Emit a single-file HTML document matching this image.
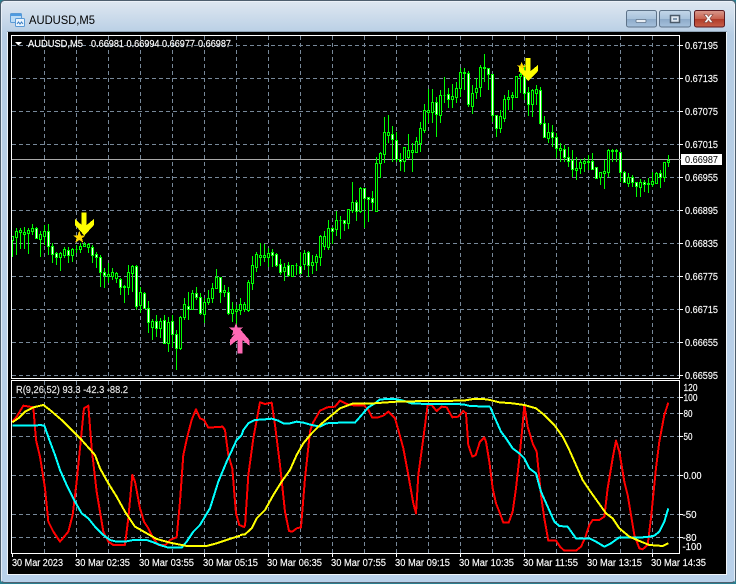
<!DOCTYPE html>
<html><head><meta charset="utf-8"><title>AUDUSD,M5</title>
<style>
html,body{margin:0;padding:0;background:#000;width:736px;height:584px;overflow:hidden}
svg{display:block}
text{font-family:"Liberation Sans",sans-serif;font-size:10px;fill:#fff;stroke:#fff;stroke-width:.15}
</style></head><body>
<svg width="736" height="584" viewBox="0 0 736 584" xmlns="http://www.w3.org/2000/svg">
<defs>
<linearGradient id="f" x1="0" y1="0" x2="0" y2="1"><stop offset="0" stop-color="#dfe8f1"/><stop offset=".06" stop-color="#b6cde4"/><stop offset="1" stop-color="#b9d1ea"/></linearGradient>
<linearGradient id="b" x1="0" y1="0" x2="0" y2="1"><stop offset="0" stop-color="#c3d6e8"/><stop offset=".5" stop-color="#a9c3dc"/><stop offset=".52" stop-color="#8daac8"/><stop offset="1" stop-color="#a6c2dd"/></linearGradient>
<linearGradient id="r" x1="0" y1="0" x2="0" y2="1"><stop offset="0" stop-color="#d99a8e"/><stop offset=".5" stop-color="#c8624f"/><stop offset=".52" stop-color="#b03a28"/><stop offset="1" stop-color="#c8604a"/></linearGradient>
</defs>
<!-- window frame -->
<rect width="736" height="584" fill="#2a7f90"/>
<rect x=".5" y=".5" width="735" height="582" rx="4" fill="url(#f)" stroke="#4e5f6e"/>
<path d="M1.5 4V581.5M734.5 4V581.5M4 1.5H732" stroke="#eef4fa" fill="none" opacity=".8"/>
<rect x="7.5" y="31.5" width="719" height="543" fill="#000" stroke="#f0f5fa" stroke-width="1" shape-rendering="crispEdges"/>
<rect x="7" y="31" width="720" height="1" fill="#8fa3b5"/>
<!-- title icon -->
<rect x="10.5" y="13.5" width="11" height="9" rx="1" fill="#bcdcf6" stroke="#5a9ad6"/>
<rect x="11" y="14" width="10" height="2" fill="#4f9be0"/>
<rect x="15.5" y="18.5" width="9" height="8" rx="1" fill="#eaf4fd" stroke="#5a9ad6"/>
<path d="M17 24l1.500-2 1.500 2 1.500-2 1.500 2" stroke="#3b7fc4" fill="none"/>
<text x="29" y="24" textLength="66" lengthAdjust="spacingAndGlyphs" style="font-size:12px;fill:#000;stroke:none">AUDUSD,M5</text>
<!-- buttons -->
<rect x="626.5" y="10.500" width="30" height="16.500" rx="2" fill="url(#b)" stroke="#5d7288"/>
<rect x="636" y="19.500" width="10" height="3" rx="1" fill="#e8eef4" stroke="#5d7288" stroke-width=".8"/>
<rect x="659.5" y="10.500" width="31" height="16.500" rx="2" fill="url(#b)" stroke="#5d7288"/>
<rect x="670.500" y="15.500" width="9" height="7" fill="#dfe8f1" stroke="#4a5a6a" stroke-width="1.500"/>
<rect x="673" y="18" width="4" height="2" fill="#7f97ae"/>
<rect x="694.5" y="10.500" width="30" height="16.500" rx="2" fill="url(#r)" stroke="#5c1a20"/>
<path d="M704 14.500h3l1.500 2 1.500-2h3l-3 4 3 4h-3l-1.500-2-1.500 2h-3l3-4z" fill="#f4f4f4" stroke="#7a3a34" stroke-width=".6"/>

<!-- chart grid -->
<g fill="none" stroke="#778899" stroke-width="1" stroke-dasharray="4 3" shape-rendering="crispEdges">
<path d="M44.5 36V378M76.5 36V378M108.5 36V378M140.5 36V378M172.5 36V378M204.5 36V378M236.5 36V378M268.5 36V378M300.5 36V378M332.5 36V378M364.5 36V378M396.5 36V378M428.5 36V378M460.5 36V378M492.5 36V378M524.5 36V378M556.5 36V378M588.5 36V378M620.5 36V378M652.5 36V378"/>
<path d="M12 45.500H679M12 78.500H679M12 111.500H679M12 144.500H679M12 177.500H679M12 210.500H679M12 243.500H679M12 276.500H679M12 309.500H679M12 342.500H679M12 375.500H679"/>
<path d="M44.500 381V553M76.500 381V553M108.500 381V553M140.500 381V553M172.500 381V553M204.500 381V553M236.500 381V553M268.500 381V553M300.500 381V553M332.500 381V553M364.500 381V553M396.500 381V553M428.500 381V553M460.500 381V553M492.500 381V553M524.500 381V553M556.500 381V553M588.500 381V553M620.500 381V553M652.500 381V553"/>
<path d="M12 397.500H679M12 413.500H679M12 436.500H679M12 475.500H679M12 514.500H679M12 537.500H679"/>
</g>
<path d="M12 159.500H679" stroke="#a9a9a9" shape-rendering="crispEdges"/>

<!-- candles -->
<g shape-rendering="crispEdges" stroke="#00ff00" stroke-width="1">
<path fill="none" d="M12.5 237V257M16.5 228V255M20.5 228V249M24.500 227V249M28.500 228V254M32.500 224V235M36.500 227V239M40.500 231V257M44.500 225V245M48.500 224V255M52.500 243V263M56.500 252V265M60.500 252V271M64.500 247V258M68.500 247V263M72.500 248V262M76.500 245V253M80.500 243V253M84.500 242V247M88.500 243V253M92.500 245V263M96.500 252V268M100.500 255V287M104.500 268V288M108.500 263V283M112.500 268V280M116.500 272V283M120.500 278V295M124.500 285V303M128.500 265V295M132.500 265V292M136.500 265V310M140.500 287V313M144.500 292V308M148.500 301V333M152.500 319V340M156.500 315V337M160.500 318V338M164.500 315V343M168.500 317V352M172.500 315V347M176.500 330V370M180.500 316V350M184.500 298V320M188.500 292V320M192.500 290V310M196.500 287V300M200.500 293V315M204.500 298V323M208.500 290V305M212.500 283V303M216.500 269V288M220.500 277V303M224.500 285V297M228.500 287V315M232.500 302V322M236.500 305V325M240.500 298V315M244.500 302V312M248.500 280V312M252.500 256V290M256.500 252V272M260.500 243V266M264.500 244V262M268.500 248V267M272.500 249V267M276.500 253V267M280.500 259V275M284.500 263V281M288.500 262V277M292.500 265V277M296.500 263V275M300.500 252V273M304.500 250V270M308.500 251V277M312.500 255V274M316.500 254V271M320.500 235V266M324.500 231V250M328.500 220V250M332.500 227V244M336.500 211V236M340.500 216V239M344.500 220V231M348.500 209V229M352.500 182V213M356.500 200V221M360.500 187V213M364.500 188V228M368.500 197V222M372.500 191V211M376.500 157V211M380.500 152V178M384.500 117V163M388.500 115V143M392.500 126V162M396.500 132V162M400.500 153V171M404.500 147V172M408.500 134V159M412.500 143V172M416.500 137V152M420.500 122V152M424.500 104V133M428.500 89V123M432.500 89V123M436.500 97V137M440.500 90V123M444.500 77V103M448.500 88V108M452.500 84V108M456.500 82V103M460.500 68V97M464.500 68V90M468.500 71V107M472.500 85V114M476.500 78V99M480.500 65V97M484.500 54V82M488.500 68V90M492.500 74V122M496.500 115V137M500.500 110V133M504.500 95V122M508.500 90V110M512.500 92V110M516.500 76V98M520.500 67V93M524.500 65V100M528.500 87V116M532.500 89V117M536.500 85V105M540.500 87V125M544.500 116V138M548.500 123V143M552.500 125V147M556.500 133V158M560.500 143V162M564.500 145V162M568.500 147V167M572.500 150V177M576.500 157V180M580.500 159V174M584.500 158V172M588.500 155V170M592.500 153V169M596.500 167V178M600.500 172V185M604.500 160V189M608.500 149V177M612.500 149V162M616.500 149V162M620.500 152V182M624.500 171V183M628.500 173V187M632.500 175V187M636.500 182V197M640.500 179V197M644.500 180V192M648.500 178V193M652.500 172V187M656.500 172V183M660.500 170V188M664.500 162V182M668.500 155V167"/>
<path fill="#000" d="M11.500 236.500h2v4h-2zM15.500 231.500h2v6h-2zM19.500 230.500h2v2h-2zM23.500 232.500h2v2h-2zM27.500 230.500h2v3h-2zM31.500 228.500h2v3h-2zM39.500 234.500h2v5h-2zM43.500 231.500h2v5h-2zM59.500 253.500h2v4h-2zM63.500 249.500h2v6h-2zM71.500 249.500h2v6h-2zM75.500 249.500h2v0h-2zM79.500 246.500h2v3h-2zM83.500 244.500h2v2h-2zM87.500 244.500h2v3h-2zM107.500 274.500h2v2h-2zM111.500 272.500h2v4h-2zM115.500 273.500h2v5h-2zM123.500 286.500h2v1h-2zM127.500 272.500h2v15h-2zM131.500 266.500h2v7h-2zM139.500 292.500h2v13h-2zM151.500 321.500h2v6h-2zM159.500 321.500h2v7h-2zM167.500 322.500h2v21h-2zM179.500 317.500h2v31h-2zM183.500 304.500h2v13h-2zM191.500 293.500h2v16h-2zM203.500 302.500h2v12h-2zM207.500 298.500h2v4h-2zM211.500 288.500h2v10h-2zM215.500 277.500h2v11h-2zM223.500 290.500h2v2h-2zM231.500 309.500h2v4h-2zM235.500 309.500h2v2h-2zM239.500 304.500h2v6h-2zM243.500 304.500h2v5h-2zM247.500 282.500h2v28h-2zM251.500 265.500h2v18h-2zM255.500 254.500h2v13h-2zM259.500 255.500h2v2h-2zM263.500 255.500h2v2h-2zM267.500 253.500h2v4h-2zM283.500 267.500h2v4h-2zM291.500 265.500h2v11h-2zM295.500 265.500h2v0h-2zM303.500 253.500h2v11h-2zM311.500 262.500h2v3h-2zM315.500 256.500h2v6h-2zM319.500 236.500h2v21h-2zM323.500 236.500h2v10h-2zM327.500 228.500h2v19h-2zM335.500 220.500h2v9h-2zM339.500 220.500h2v0h-2zM347.500 209.500h2v14h-2zM351.500 202.500h2v8h-2zM359.500 188.500h2v23h-2zM375.500 163.500h2v48h-2zM379.500 153.500h2v10h-2zM383.500 132.500h2v22h-2zM387.500 132.500h2v3h-2zM403.500 147.500h2v14h-2zM407.500 150.500h2v7h-2zM411.500 150.500h2v2h-2zM415.500 141.500h2v11h-2zM419.500 128.500h2v15h-2zM423.500 110.500h2v20h-2zM427.500 110.500h2v2h-2zM431.500 102.500h2v10h-2zM439.500 95.500h2v20h-2zM443.500 95.500h2v0h-2zM451.500 96.500h2v3h-2zM455.500 88.500h2v9h-2zM459.500 72.500h2v16h-2zM463.500 72.500h2v1h-2zM471.500 93.500h2v13h-2zM475.500 88.500h2v4h-2zM479.500 67.500h2v20h-2zM483.500 67.500h2v1h-2zM499.500 116.500h2v12h-2zM503.500 99.500h2v19h-2zM507.500 97.500h2v2h-2zM511.500 95.500h2v2h-2zM515.500 76.500h2v21h-2zM519.500 74.500h2v2h-2zM531.500 90.500h2v14h-2zM535.500 89.500h2v4h-2zM547.500 132.500h2v6h-2zM559.500 148.500h2v2h-2zM575.500 168.500h2v2h-2zM579.500 162.500h2v6h-2zM583.500 161.500h2v2h-2zM587.500 161.500h2v1h-2zM599.500 172.500h2v5h-2zM603.500 171.500h2v2h-2zM607.500 150.500h2v22h-2zM611.500 150.500h2v1h-2zM615.500 150.500h2v1h-2zM627.500 177.500h2v6h-2zM639.500 182.500h2v5h-2zM647.500 183.500h2v1h-2zM651.500 181.500h2v3h-2zM655.500 173.500h2v10h-2zM663.500 162.500h2v15h-2zM667.500 160.500h2v2h-2z"/>
<path fill="#fff" d="M35.500 228.500h2v10h-2zM47.500 231.500h2v15h-2zM51.500 246.500h2v8h-2zM55.500 253.500h2v4h-2zM67.500 250.500h2v5h-2zM91.500 247.500h2v8h-2zM95.500 254.500h2v3h-2zM99.500 257.500h2v15h-2zM103.500 272.500h2v3h-2zM119.500 279.500h2v8h-2zM135.500 266.500h2v40h-2zM143.500 293.500h2v15h-2zM147.500 308.500h2v14h-2zM155.500 321.500h2v7h-2zM163.500 320.500h2v23h-2zM171.500 321.500h2v13h-2zM175.500 334.500h2v14h-2zM187.500 306.500h2v3h-2zM195.500 293.500h2v4h-2zM199.500 297.500h2v16h-2zM219.500 277.500h2v15h-2zM227.500 292.500h2v21h-2zM271.500 252.500h2v3h-2zM275.500 254.500h2v11h-2zM279.500 264.500h2v8h-2zM287.500 265.500h2v10h-2zM299.500 266.500h2v7h-2zM307.500 252.500h2v13h-2zM331.500 228.500h2v3h-2zM343.500 220.500h2v3h-2zM355.500 202.500h2v9h-2zM363.500 188.500h2v10h-2zM367.500 197.500h2v2h-2zM371.500 198.500h2v4h-2zM391.500 134.500h2v5h-2zM395.500 140.500h2v19h-2zM399.500 159.500h2v2h-2zM435.500 102.500h2v12h-2zM447.500 94.500h2v5h-2zM467.500 73.500h2v31h-2zM487.500 68.500h2v6h-2zM491.500 74.500h2v41h-2zM495.500 115.500h2v13h-2zM523.500 76.500h2v17h-2zM527.500 92.500h2v12h-2zM539.500 90.500h2v33h-2zM543.500 123.500h2v14h-2zM551.500 132.500h2v5h-2zM555.500 137.500h2v11h-2zM563.500 149.500h2v8h-2zM567.500 157.500h2v4h-2zM571.500 160.500h2v9h-2zM591.500 161.500h2v8h-2zM595.500 167.500h2v11h-2zM619.500 152.500h2v20h-2zM623.500 172.500h2v10h-2zM631.500 177.500h2v5h-2zM635.500 182.500h2v4h-2zM643.500 182.500h2v2h-2zM659.500 173.500h2v4h-2z"/>
</g>

<!-- arrows and stars -->
<g transform="scale(.3333) translate(0 600)" shape-rendering="crispEdges">
<polygon fill="#ffd700" points="238,92 243,106 257,106 246,115 250,128 238,120 226,128 230,115 219,106 233,106"/>
<polygon fill="#ffff00" points="245,37 260,37 260,75 282,57 282,75 253,107 225,75 225,57 245,75"/>
<polygon fill="#ff69b4" points="712,460 727,460 727,420 748,437 748,420 718,385 690,420 690,437 712,420"/>
<polygon fill="#ff69b4" points="708,368 713,383 729,383 716,393 721,408 708,399 695,408 700,393 687,383 703,383"/>
</g>
<g transform="translate(420 40) scale(.3333)" shape-rendering="crispEdges">
<polygon fill="#ffd700" points="305,65 309,76 320,76 311,83 314,94 305,88 296,94 299,83 290,76 301,76"/>
<polygon fill="#ffff00" points="317,54 332,54 332,93 354,75 354,93 325,123 297,93 297,78 317,93"/>
</g>

<!-- indicator -->
<g fill="none" stroke-width="6" stroke-linejoin="round" shape-rendering="crispEdges">
<g transform="translate(0 375) scale(.3333)">
<polyline stroke="#ff0000" points="37,140 50,125 70,92 100,97 108,195 120,245 135,340 145,440 160,470 180,500 205,470 218,420 230,320 243,190 252,100 265,92 275,220 290,350 310,470 325,500 340,510 375,510 385,430 397,300 405,320 420,400 432,440 445,460 460,490 475,510 497,510 510,495 530,487 540,380 550,240 562,185 575,135 588,103 600,130 612,135 625,158 668,155 675,165 685,240 697,280 708,415 718,450 735,457"/>
</g>
<g transform="translate(240 375) scale(.3333)">
<polyline stroke="#ff0000" points="15,455 25,300 40,190 60,82 75,87 95,83 105,150 120,270 135,410 147,468 157,470 170,460 183,457 195,310 210,170 218,145 240,107 262,97 285,95 300,77 320,87 345,92 373,92 385,105 397,128 415,127 430,122 445,110 465,130 475,165 490,220 505,300 520,385 528,415 535,300 550,190 563,90 575,90 590,108 605,95 620,97 637,127 655,125 670,108 678,115 685,210 697,245 707,240 720,200 733,187 738,200"/>
</g>
<g transform="translate(486 375) scale(.3333)">
<polyline stroke="#ff0000" points="0,200 10,260 20,340 30,385 40,410 52,443 68,443 80,410 90,340 100,250 108,170 115,90 125,155 140,205 152,230 165,360 175,430 187,497 210,497 222,515 235,527 270,527 285,515 297,490 310,450 320,435 340,435 355,425 365,340 380,250 390,197 400,230 415,320 425,360 445,480 460,520 470,523 485,510 495,430 510,280 520,200 535,120 547,83"/>
</g>
<g transform="translate(0 375) scale(.3333)">
<polyline stroke="#00ffff" points="37,152 105,152 120,150 133,152 150,200 165,240 180,285 200,330 225,380 245,415 265,430 285,455 310,480 330,495 350,500 375,500 400,495 440,495 460,502 480,510 505,518 545,518 560,500 580,470 600,450 630,400 655,320 680,260 710,195 725,180"/>
</g>
<g transform="translate(240 375) scale(.3333)">
<polyline stroke="#00ffff" points="5,180 10,165 25,145 45,135 75,133 95,131 115,137 130,145 150,145 170,140 190,143 215,150 240,155 260,145 300,143 345,143 365,120 385,97 405,85 420,73 465,72 490,77 515,85 560,87 640,87 670,88 690,93 750,95"/>
</g>
<g transform="translate(486 375) scale(.3333)">
<polyline stroke="#00ffff" points="12,95 25,125 45,170 60,190 80,220 100,235 115,250 130,280 150,295 165,350 185,395 205,440 220,453 245,455 270,490 310,490 330,500 355,515 375,505 400,487 470,487 490,485 505,482 520,470 535,440 547,400"/>
</g>
<g transform="translate(0 375) scale(.3333)">
<polyline stroke="#ffff00" points="37,142 55,130 75,110 100,97 130,90 150,105 185,135 215,165 245,195 285,240 300,280 325,325 350,365 375,410 405,455 440,475 470,492 510,503 560,513 620,513 650,505 680,495 720,482"/>
</g>
<g transform="translate(240 375) scale(.3333)">
<polyline stroke="#ffff00" points="0,480 15,478 35,460 50,430 75,405 100,360 125,320 150,285 170,240 190,205 215,175 240,150 270,125 300,100 340,85 400,85 470,80 560,78 670,77 700,72 730,72 750,75"/>
</g>
<g transform="translate(486 375) scale(.3333)">
<polyline stroke="#ffff00" points="12,75 40,82 80,85 115,90 150,100 175,120 205,150 230,185 250,225 270,270 290,315 310,345 335,380 360,415 380,430 400,460 430,485 465,500 490,510 530,513 547,505"/>
</g>
</g>

<!-- panel borders and ticks -->
<g fill="none" stroke="#fff" shape-rendering="crispEdges">
<rect x="11.500" y="35.500" width="668" height="343"/>
<rect x="11.500" y="380.500" width="668" height="173"/>
<path d="M679 45.500h4M679 78.500h4M679 111.500h4M679 144.500h4M679 177.500h4M679 210.500h4M679 243.500h4M679 276.500h4M679 309.500h4M679 342.500h4M679 375.500h4"/>
<path d="M679 397.500h4M679 413.500h4M679 436.500h4M679 475.500h4M679 514.500h4M679 537.500h4"/>
<path d="M12.500 553v4M76.500 553v4M140.500 553v4M204.500 553v4M268.500 553v4M332.500 553v4M396.500 553v4M460.500 553v4M524.500 553v4M588.500 553v4M652.500 553v4"/>
</g>
<path d="M679 159.500h2" stroke="#a9a9a9" shape-rendering="crispEdges"/>

<!-- labels -->
<path d="M15 42h7l-3.500 3.500z" fill="#fff"/>
<text x="28" y="47" textLength="55" lengthAdjust="spacingAndGlyphs">AUDUSD,M5</text>
<text x="91" y="47" textLength="33" lengthAdjust="spacingAndGlyphs">0.66981</text>
<text x="126.500" y="47" textLength="33" lengthAdjust="spacingAndGlyphs">0.66994</text>
<text x="162" y="47" textLength="33" lengthAdjust="spacingAndGlyphs">0.66977</text>
<text x="198" y="47" textLength="33" lengthAdjust="spacingAndGlyphs">0.66987</text>
<text x="16" y="393" textLength="112" lengthAdjust="spacingAndGlyphs" style="fill:#e0e0e0">R(9,26,52) 93.3 -42.3 -88.2</text>

<text x="685" y="49" textLength="33" lengthAdjust="spacingAndGlyphs">0.67195</text>
<text x="685" y="82" textLength="33" lengthAdjust="spacingAndGlyphs">0.67135</text>
<text x="685" y="115" textLength="33" lengthAdjust="spacingAndGlyphs">0.67075</text>
<text x="685" y="148" textLength="33" lengthAdjust="spacingAndGlyphs">0.67015</text>
<rect x="681" y="154" width="41" height="11" fill="#fff"/>
<text x="685" y="163" textLength="33" lengthAdjust="spacingAndGlyphs" style="fill:#000;stroke:none">0.66987</text>
<text x="685" y="181" textLength="33" lengthAdjust="spacingAndGlyphs">0.66955</text>
<text x="685" y="214" textLength="33" lengthAdjust="spacingAndGlyphs">0.66895</text>
<text x="685" y="247" textLength="33" lengthAdjust="spacingAndGlyphs">0.66835</text>
<text x="685" y="280" textLength="33" lengthAdjust="spacingAndGlyphs">0.66775</text>
<text x="685" y="313" textLength="33" lengthAdjust="spacingAndGlyphs">0.66715</text>
<text x="685" y="346" textLength="33" lengthAdjust="spacingAndGlyphs">0.66655</text>
<text x="685" y="379" textLength="33" lengthAdjust="spacingAndGlyphs">0.66595</text>

<text x="683.500" y="391" textLength="14" lengthAdjust="spacingAndGlyphs">120</text>
<text x="683.500" y="401" textLength="14" lengthAdjust="spacingAndGlyphs">100</text>
<text x="683.500" y="417" textLength="9" lengthAdjust="spacingAndGlyphs">80</text>
<text x="683.500" y="440" textLength="9" lengthAdjust="spacingAndGlyphs">50</text>
<text x="683.500" y="479" textLength="18" lengthAdjust="spacingAndGlyphs">0.00</text>
<text x="682.500" y="518" textLength="14" lengthAdjust="spacingAndGlyphs">-50</text>
<text x="682.500" y="541" textLength="14" lengthAdjust="spacingAndGlyphs">-80</text>
<text x="682.500" y="550" textLength="19" lengthAdjust="spacingAndGlyphs">-100</text>

<text x="12" y="566" textLength="51" lengthAdjust="spacingAndGlyphs">30 Mar 2023</text>
<text x="75" y="566" textLength="55" lengthAdjust="spacingAndGlyphs">30 Mar 02:35</text>
<text x="139" y="566" textLength="55" lengthAdjust="spacingAndGlyphs">30 Mar 03:55</text>
<text x="203" y="566" textLength="55" lengthAdjust="spacingAndGlyphs">30 Mar 05:15</text>
<text x="267" y="566" textLength="55" lengthAdjust="spacingAndGlyphs">30 Mar 06:35</text>
<text x="331" y="566" textLength="55" lengthAdjust="spacingAndGlyphs">30 Mar 07:55</text>
<text x="395" y="566" textLength="55" lengthAdjust="spacingAndGlyphs">30 Mar 09:15</text>
<text x="459" y="566" textLength="55" lengthAdjust="spacingAndGlyphs">30 Mar 10:35</text>
<text x="523" y="566" textLength="55" lengthAdjust="spacingAndGlyphs">30 Mar 11:55</text>
<text x="587" y="566" textLength="55" lengthAdjust="spacingAndGlyphs">30 Mar 13:15</text>
<text x="651" y="566" textLength="55" lengthAdjust="spacingAndGlyphs">30 Mar 14:35</text>
</svg>
</body></html>
